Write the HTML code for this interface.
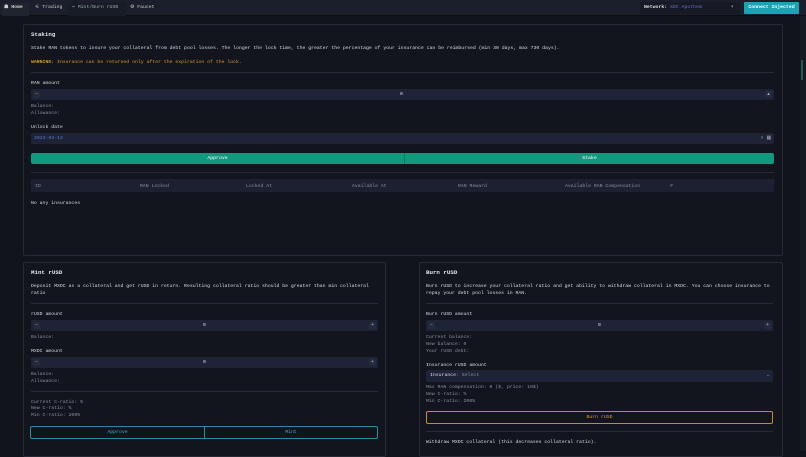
<!DOCTYPE html>
<html><head><meta charset="utf-8"><style>
*{margin:0;padding:0;box-sizing:border-box}
body{width:806px;height:451px;overflow:hidden;background:#11141b;font-family:"Liberation Mono",monospace;font-size:4.82px;color:#d8dbe2;position:relative}
.a{position:absolute;white-space:nowrap}
.hdr{position:absolute;left:0;top:0;width:806px;height:16px;background:#1b1f2b;border-bottom:1px solid #0c0e13}
.card{position:absolute;background:#12151d;border:1px solid #262a35;border-radius:2px}
.div{position:absolute;height:1px;background:#262a35}
.inp{position:absolute;background:#1e2338;border-radius:2px;height:11px}
.btn{position:absolute;width:7px;height:7px;top:2px;background:#262b3a;border-radius:1px;font-size:5px;color:#aaa;text-align:center;line-height:7px}
.g{color:#8a8f9c}
.t{font-size:5.8px;font-weight:bold;color:#e4e6ea}
</style></head><body>
<div class="hdr"></div>
<div class="a" style="left:2px;top:3px;height:13px;width:27px;background:#20242f"></div>
<div class="a" style="left:4px;top:5px;font-weight:bold;color:#ccc">☗ Home</div>
<div class="a" style="left:35px;top:5px;color:#ccc">⚟ Trading</div>
<div class="a" style="left:68px;top:2px;width:58px;height:14px;background:#181c26"></div>
<div class="a" style="left:72px;top:5px;color:#9aa">⌁ Mint/Burn rUSD</div>
<div class="a" style="left:130px;top:5px;color:#ccc">⚙ Faucet</div>
<div class="a" style="left:640px;top:2px;width:100px;height:12px;background:#171a24"></div>
<div class="a" style="left:644px;top:5px;font-weight:bold;color:#ddd">Network: <span style="color:#5b74d6;font-weight:normal">XDC Apothem</span></div>
<div class="a" style="left:731px;top:5px;color:#777">▾</div>
<div class="a" style="left:744px;top:2px;width:55px;height:12px;background:#1aa2b5;border-radius:1px;color:#fff;font-weight:bold;text-align:center;line-height:12px">Connect Injected</div>
<div class="a" style="left:800px;top:16px;width:6px;height:435px;background:#161b22"></div>
<div class="a" style="left:801px;top:60px;width:2px;height:20px;background:#1f5c5a"></div>

<!-- Staking -->
<div class="card" style="left:23px;top:24px;width:760px;height:232px"></div>
<div class="a t" style="left:31px;top:31px">Staking</div>
<div class="a" style="left:31px;top:46px">Stake RAN tokens to insure your collateral from debt pool losses. The longer the lock time, the greater the percentage of your insurance can be reimbursed (min 30 days, max 730 days).</div>
<div class="a" style="left:31px;top:60px;color:#d79a2a"><b>WARNING:</b> Insurance can be returned only after the expiration of the lock.</div>
<div class="div" style="left:31px;top:72px;width:743px"></div>
<div class="a" style="left:31px;top:81px">RAN amount</div>
<div class="inp" style="left:31px;top:89px;width:743px"><div class="btn" style="left:2px">–</div><div class="a" style="left:369px;top:3px">0</div><div class="btn" style="right:2px">▴</div></div>
<div class="a g" style="left:31px;top:104px">Balance:</div>
<div class="a g" style="left:31px;top:111px">Allowance:</div>
<div class="a" style="left:31px;top:125px">Unlock date</div>
<div class="inp" style="left:31px;top:133px;width:743px"><div class="a" style="left:3px;top:3px;color:#5b74d6">2023-03-13</div><div class="a" style="right:3px;top:3px;color:#aaa">× ▦</div></div>
<div class="a" style="left:31px;top:153px;width:373px;height:11px;background:#139a7e;border-radius:2px 0 0 2px;color:#fff;text-align:center;line-height:11px">Approve</div>
<div class="a" style="left:404px;top:153px;width:370px;height:11px;background:#139a7e;border-radius:0 2px 2px 0;color:#fff;text-align:center;line-height:11px;border-left:1px solid #0e7a64">Stake</div>
<div class="div" style="left:31px;top:172px;width:743px"></div>
<div class="a" style="left:31px;top:179px;width:743px;height:13px;background:#1c2030"></div>
<div class="a g" style="left:35px;top:184px">ID</div>
<div class="a g" style="left:140px;top:184px">RAN Locked</div>
<div class="a g" style="left:246px;top:184px">Locked At</div>
<div class="a g" style="left:352px;top:184px">Available At</div>
<div class="a g" style="left:458px;top:184px">RAN Reward</div>
<div class="a g" style="left:565px;top:184px">Available RAN Compensation</div>
<div class="a g" style="left:670px;top:184px">#</div>
<div class="a" style="left:31px;top:201px">No any insurances</div>

<!-- Mint -->
<div class="card" style="left:23px;top:262px;width:363px;height:195px"></div>
<div class="a t" style="left:31px;top:269px">Mint rUSD</div>
<div class="a" style="left:31px;top:284px">Deposit MXDC as a collateral and get rUSD in return. Resulting collateral ratio should be greater than min collateral</div>
<div class="a" style="left:31px;top:291px">ratio</div>
<div class="div" style="left:31px;top:303px;width:347px"></div>
<div class="a" style="left:31px;top:312px">rUSD amount</div>
<div class="inp" style="left:31px;top:320px;width:347px"><div class="btn" style="left:2px">–</div><div class="a" style="left:172px;top:3px">0</div><div class="btn" style="right:2px">+</div></div>
<div class="a g" style="left:31px;top:335px">Balance:</div>
<div class="a" style="left:31px;top:349px">MXDC amount</div>
<div class="inp" style="left:31px;top:357px;width:347px"><div class="btn" style="left:2px">–</div><div class="a" style="left:172px;top:3px">0</div><div class="btn" style="right:2px">+</div></div>
<div class="a g" style="left:31px;top:372px">Balance:</div>
<div class="a g" style="left:31px;top:379px">Allowance:</div>
<div class="div" style="left:31px;top:391px;width:347px"></div>
<div class="a g" style="left:31px;top:400px">Current C-ratio: %</div>
<div class="a g" style="left:31px;top:406px">New C-ratio: %</div>
<div class="a g" style="left:31px;top:413px">Min C-ratio: 200%</div>
<div class="a" style="left:30px;top:426px;width:175px;height:13px;border:1px solid #1e8fa6;border-radius:2px 0 0 2px;color:#3fb3d3;text-align:center;line-height:11px">Approve</div>
<div class="a" style="left:204px;top:426px;width:174px;height:13px;border:1px solid #1e8fa6;border-radius:0 2px 2px 0;color:#3fb3d3;text-align:center;line-height:11px">Mint</div>

<!-- Burn -->
<div class="card" style="left:419px;top:262px;width:364px;height:195px"></div>
<div class="a t" style="left:426px;top:269px">Burn rUSD</div>
<div class="a" style="left:426px;top:284px">Burn rUSD to increase your collateral ratio and get ability to withdraw collateral in MXDC. You can choose insurance to</div>
<div class="a" style="left:426px;top:291px">repay your debt pool losses in RAN.</div>
<div class="div" style="left:426px;top:303px;width:347px"></div>
<div class="a" style="left:426px;top:312px">Burn rUSD amount</div>
<div class="inp" style="left:426px;top:320px;width:347px"><div class="btn" style="left:2px">–</div><div class="a" style="left:172px;top:3px">0</div><div class="btn" style="right:2px">+</div></div>
<div class="a g" style="left:426px;top:335px">Current balance:</div>
<div class="a g" style="left:426px;top:342px">New balance: 0</div>
<div class="a g" style="left:426px;top:349px">Your rUSD debt:</div>
<div class="a" style="left:426px;top:363px">Insurance rUSD amount</div>
<div class="inp" style="left:426px;top:370px;width:347px;height:12px"><div class="a" style="left:4px;top:3px">Insurance<span class="g">: Select</span></div><div class="a g" style="right:3px;top:3px">⌄</div></div>
<div class="a g" style="left:426px;top:385px">Max RAN compensation: 0 ($, price: 10$)</div>
<div class="a g" style="left:426px;top:392px">New C-ratio: %</div>
<div class="a g" style="left:426px;top:399px">Min C-ratio: 200%</div>
<div class="a" style="left:426px;top:411px;width:347px;height:13px;border:1px solid #c98a2a;border-radius:2px;color:#e39a2f;text-align:center;line-height:11px">Burn rUSD</div>
<div class="div" style="left:426px;top:431px;width:347px"></div>
<div class="a" style="left:426px;top:440px">Withdraw MXDC collateral (this decreases collateral ratio).</div>
</body></html>
